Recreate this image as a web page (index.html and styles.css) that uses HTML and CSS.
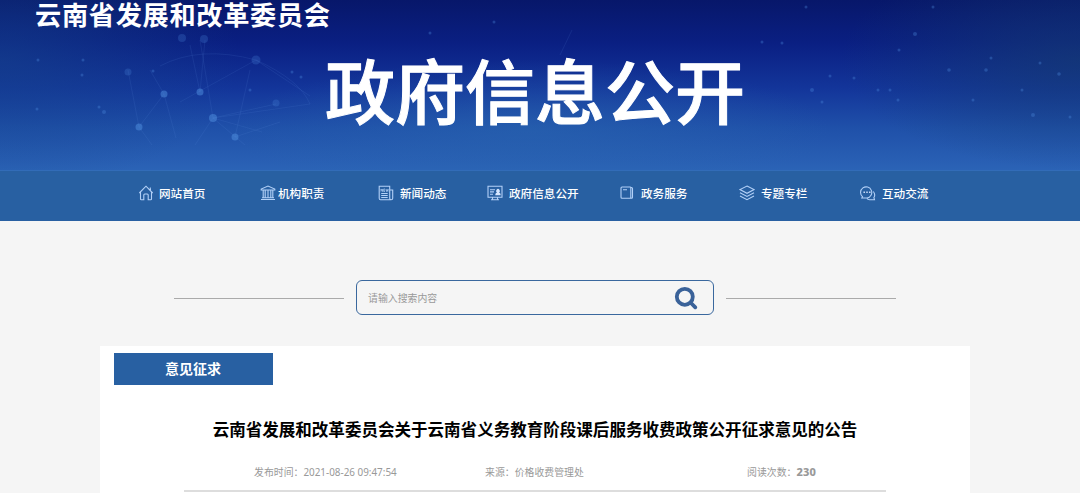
FILE: index.html
```html
<!DOCTYPE html>
<html lang="zh-CN">
<head>
  <meta charset="UTF-8" />
  <title>云南省发展和改革委员会</title>
  <link rel="stylesheet" href="styles.css">
</head>
<body>

<header class="banner">
  <svg class="stars" width="1080" height="170" viewBox="0 0 1080 170">
    <g fill="none" stroke="#5c8ce0" stroke-opacity=".16" stroke-width=".8">
      <path d="M128 70L139 127L164 94L150 70M164 94L176 138M139 127L152 145M180 102L256 60M213 118L200 40M200 92L190 45M200 92L205 40M235 137L250 70M276 104L213 118L262 132M213 118L310 104M213 118L195 145M235 137L280 122M256 60L310 96M213 118L245 145M160 66Q200 45 256 60Q300 80 310 104M560 55L572 30" />
    </g>
    <g fill="#4f8fe0">
      <g fill-opacity=".5"><circle cx="139" cy="127" r="3.5" /><circle cx="164" cy="94" r="3.5" /><circle cx="200" cy="92" r="3.5" /><circle cx="213" cy="118" r="4" /><circle cx="235" cy="137" r="3.5" /></g>
      <g fill-opacity=".24"><circle cx="256" cy="60" r="4.5" /><circle cx="276" cy="103" r="3.5" /><circle cx="182" cy="38" r="4" /><circle cx="204" cy="39" r="4" /><circle cx="128" cy="72" r="3.5" /></g>
      <g fill-opacity=".33"><circle cx="83" cy="60" r="1.5" /><circle cx="82" cy="75" r="1.5" /><circle cx="99" cy="107" r="1.5" /><circle cx="104" cy="112" r="2" /><circle cx="38" cy="60" r="1.5" /><circle cx="37" cy="109" r="1.5" /><circle cx="153" cy="71" r="1.5" /><circle cx="292" cy="72" r="1.5" /><circle cx="301" cy="77" r="1.5" /><circle cx="250" cy="90" r="1.5" /><circle cx="494" cy="22" r="1.5" /><circle cx="430" cy="33" r="1.5" /><circle cx="762" cy="42" r="1.5" /><circle cx="782" cy="43" r="1.5" /><circle cx="812" cy="90" r="2" /><circle cx="822" cy="102" r="1.5" /><circle cx="830" cy="76" r="1.5" /><circle cx="854" cy="78" r="1.5" /><circle cx="878" cy="90" r="1.5" /><circle cx="890" cy="90" r="1.5" /><circle cx="899" cy="50" r="1.5" /><circle cx="898" cy="100" r="1.5" /><circle cx="915" cy="34" r="2" /><circle cx="933" cy="7" r="1.5" /><circle cx="949" cy="70" r="1.8" /><circle cx="986" cy="70" r="1.8" /><circle cx="991" cy="58" r="1.5" /><circle cx="973" cy="100" r="1.5" /><circle cx="1022" cy="90" r="1.5" /><circle cx="1040" cy="63" r="1.5" /><circle cx="1059" cy="74" r="1.8" /><circle cx="1033" cy="115" r="2" /><circle cx="806" cy="7" r="1.5" /><circle cx="1070" cy="117" r="1.5" /></g>
    </g>
  </svg>
  <div class="org">云南省发展和改革委员会</div>
  <h1>政府信息公开</h1>
</header>

<nav class="nav">
  <a class="home"><svg width="16" height="16" viewBox="0 0 16 16"><path d="M1.300 8L8 1.200 14.700 8M2.500 7.300V14q0 .8.800.8h2.500V10q0-1 1-1h2.400q1 0 1 1v4.800h2.500q.8 0 .8-.8V7.300M12.300 2.500V5" /></svg>网站首页</a>
  <a class="duty"><svg width="16" height="16" viewBox="0 0 16 16"><path d="M1.200 5V4L8 1l6.800 3v1zM1 14.500h14M2 12.800h12M3.200 5v8M5.200 5v8M8 5v8M10.800 5v8M12.800 5v8" /></svg>机构职责</a>
  <a class="news"><svg width="16" height="16" viewBox="0 0 16 16"><path d="M13 14.700H2.500q-1.300 0-1.300-1.500V1.200h10.500v12q0 1.500 1.500 1.500t1.500-1.500V5h-3M3.200 8.500h6.500M3.200 10.500h6.500M3.200 12.500h6.500" /><path class="thin" d="M3 6.500V4l1.500 2.500V4M7 4H5.700v2.500H7M5.700 5.200H7M8 4l.5 2.500.7-2 .6 2 .5-2.500" /></svg>新闻动态</a>
  <a class="open"><svg width="16" height="16" viewBox="0 0 16 16"><path d="M1 1.300h14v11H1zM4 14.800h8M5.500 12.500v2M10.500 12.500v2M3 4.700h5M3 6.900h4M3 9.200h3" /><path class="solid" d="M8.300 10.300c0-2 1-2.600 1.700-2.800a1.900 1.900 0 1 1 2 0c1 .2 1.700 1 1.700 2.800z" /></svg>政府信息公开</a>
  <a class="service"><svg width="16" height="16" viewBox="0 0 16 16"><path d="M3 2h8q.8 0 .8.800v10.500H3q-1 0-1-1V3q0-1 1-1zM11.800 2.500h.7q1 0 1 1v8.800q0 1-1 1h-1M4 4.800h4" /></svg>政务服务</a>
  <a class="topic"><svg width="16" height="16" viewBox="0 0 16 16"><path d="M8 1l7 3.600-7 3.700-7-3.700zM1 7.800l7 3.700 7-3.700M1 11l7 3.700L15 11" /></svg>专题专栏</a>
  <a class="talk"><svg width="16" height="16" viewBox="0 0 16 16"><path d="M2.500 11.700A5.600 5.600 0 1 1 7 13H1.800zM13.300 6.500q2.500 3 .6 6l.6 2.200H9.500q-1.500 0-2.500-1" /><path class="solid" d="M3.500 6.500h1.400v1.400H3.500zM6.300 6.500h1.400v1.400H6.300zM9.100 6.500h1.400v1.400H9.100z" /></svg>互动交流</a>
</nav>

<div class="search-row">
  <span class="rule"></span>
  <div class="search">
    <span>请输入搜索内容</span>
    <svg width="24" height="24" viewBox="0 0 24 24"><circle cx="10.800" cy="10.800" r="8" /><path d="M17 17l4.300 4.300" /></svg>
  </div>
  <span class="rule"></span>
</div>

<main class="article">
  <div class="tag">意见征求</div>
  <h2>云南省发展和改革委员会关于云南省义务教育阶段课后服务收费政策公开征求意见的公告</h2>
  <div class="meta">
    <span class="date">发布时间：2021-08-26 09:47:54</span>
    <span class="source">来源：价格收费管理处</span>
    <span class="count">阅读次数：<b>230</b></span>
  </div>
</main>

</body>
</html>
```
FILE: styles.css
```css
* { box-sizing: border-box; }
body {
  margin: 0;
  height: 493px;
  background: #f5f5f5;
  font-family: "Noto Sans", "Noto Sans CJK SC", sans-serif;
}
.banner {
  position: relative;
  height: 170px;
  color: #fff;
  font-family: "Noto Sans CJK SC", sans-serif;
  background:
    radial-gradient(ellipse 300px 70px at 530px 130px, rgba(42, 104, 176, .5), transparent),
    radial-gradient(ellipse 240px 130px at 0 60px, rgba(22, 70, 140, .55), transparent),
    radial-gradient(ellipse 240px 110px at 1080px 60px, rgba(22, 62, 110, .6), transparent),
    linear-gradient(#07176a, #0a1f82 25%, #13359a 52%, #1f50a9 75%, #2b63b6);
}
.stars { position: absolute; top: 0; left: 0; }
.org {
  position: relative;
  padding-left: 35px;
  height: 28px;
  font-size: 26.200px;
  line-height: 28px;
  letter-spacing: .700px;
  font-weight: bold;
}
h1 {
  position: relative;
  margin: 10px 0 0;
  padding-left: 325px;
  font-size: 70px;
  line-height: 101px;
  font-weight: 500;
  white-space: nowrap;
  -webkit-text-stroke: 1px #fff;
}
.nav {
  display: grid;
  grid-template-columns: 122px 118px 109px 132px 120px 121px 100px;
  height: 51px;
  padding-left: 138px;
  border-top: 1px solid #326cb8;
  background: #2860a2;
}
.nav a {
  display: flex;
  align-items: center;
  height: 43px;
  gap: 6px;
  color: #fff;
  font-size: 11.600px;
  font-weight: 500;
  white-space: nowrap;
}
.nav svg { fill: none; stroke: #b2d0f7; stroke-width: 1.100; }
.nav .thin { stroke-width: .700; }
.nav .solid { fill: #d5e6ff; stroke: none; }
.nav .home { gap: 5px; }
.nav .duty { gap: 2px; }
.search-row {
  display: flex;
  justify-content: center;
  align-items: center;
  gap: 12px;
  margin-top: 58px;
  height: 36px;
  padding-right: 10px;
}
.rule { width: 170px; height: 1px; margin-top: 2px; background: #aaa; }
.search {
  display: flex;
  align-items: center;
  justify-content: space-between;
  width: 358px;
  height: 35px;
  padding: 2px 15px 0 11px;
  border: 1.500px solid #3a689e;
  border-radius: 6px;
  color: #999;
  font-size: 9.900px;
}
.search svg { fill: none; stroke: #3a6299; stroke-width: 3.800; stroke-linecap: round; }
.article {
  width: 870px;
  height: 147px;
  margin: 31px 0 0 100px;
  padding: 7px 14px 0;
  background: #fff;
}
.tag {
  width: 159px;
  height: 32px;
  padding-right: 1px;
  background: #2860a2;
  color: #fff;
  font-size: 14px;
  line-height: 32px;
  font-weight: bold;
  text-align: center;
}
h2 {
  margin: 32px 0 0;
  color: #000;
  font-size: 16.540px;
  line-height: 26px;
  font-weight: bold;
  text-align: center;
  white-space: nowrap;
}
.meta {
  display: grid;
  grid-template-columns: 231px 262px 1fr;
  width: 702px;
  height: 49px;
  margin-left: 70px;
  padding: 9px 0 0 70px;
  border-bottom: 2px solid #ddd;
  color: #999;
  font-size: 9.900px;
  line-height: 40px;
}
.meta b { font-size: 11px; font-weight: 800; letter-spacing: .200px; }
```
